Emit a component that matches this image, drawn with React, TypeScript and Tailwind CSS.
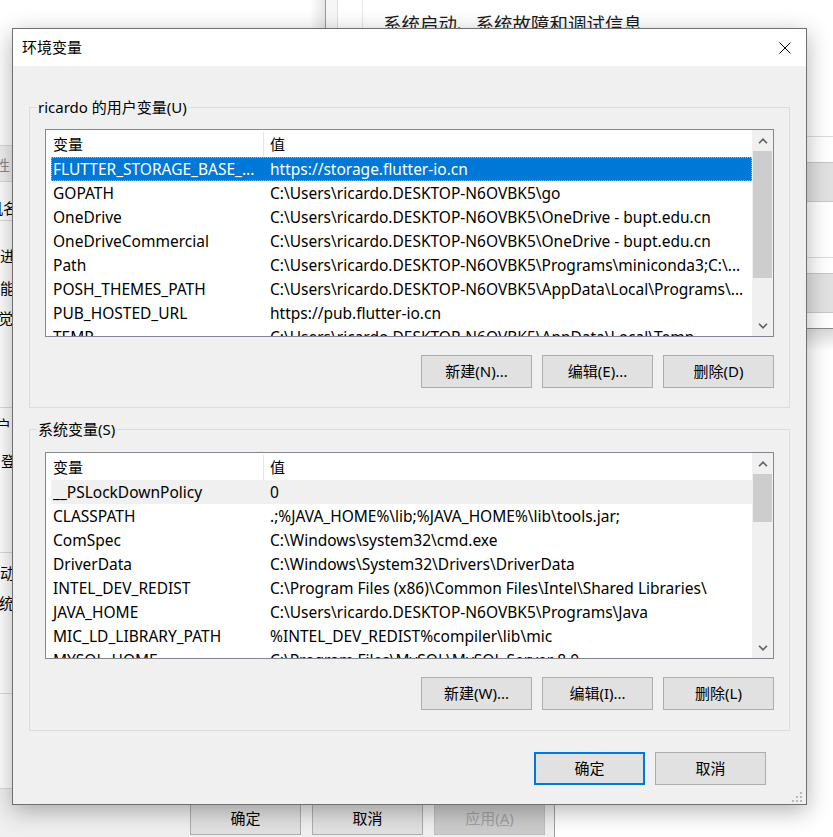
import React from "react";

type Row = [string, string];

const userRows: Row[] = [
  ["FLUTTER_STORAGE_BASE_...", "https://storage.flutter-io.cn"],
  ["GOPATH", "C:\\Users\\ricardo.DESKTOP-N6OVBK5\\go"],
  ["OneDrive", "C:\\Users\\ricardo.DESKTOP-N6OVBK5\\OneDrive - bupt.edu.cn"],
  ["OneDriveCommercial", "C:\\Users\\ricardo.DESKTOP-N6OVBK5\\OneDrive - bupt.edu.cn"],
  ["Path", "C:\\Users\\ricardo.DESKTOP-N6OVBK5\\Programs\\miniconda3;C:\\..."],
  ["POSH_THEMES_PATH", "C:\\Users\\ricardo.DESKTOP-N6OVBK5\\AppData\\Local\\Programs\\..."],
  ["PUB_HOSTED_URL", "https://pub.flutter-io.cn"],
  ["TEMP", "C:\\Users\\ricardo.DESKTOP-N6OVBK5\\AppData\\Local\\Temp"],
];

const sysRows: Row[] = [
  ["__PSLockDownPolicy", "0"],
  ["CLASSPATH", ".;%JAVA_HOME%\\lib;%JAVA_HOME%\\lib\\tools.jar;"],
  ["ComSpec", "C:\\Windows\\system32\\cmd.exe"],
  ["DriverData", "C:\\Windows\\System32\\Drivers\\DriverData"],
  ["INTEL_DEV_REDIST", "C:\\Program Files (x86)\\Common Files\\Intel\\Shared Libraries\\"],
  ["JAVA_HOME", "C:\\Users\\ricardo.DESKTOP-N6OVBK5\\Programs\\Java"],
  ["MIC_LD_LIBRARY_PATH", "%INTEL_DEV_REDIST%compiler\\lib\\mic"],
  ["MYSQL_HOME", "C:\\Program Files\\MySQL\\MySQL Server 8.0"],
];

function Chevron({ down }: { down?: boolean }) {
  return (
    <svg width="10" height="6" viewBox="0 0 10 6" className={down ? "rotate-180" : ""}>
      <path d="M1 5.2 L5 1.2 L9 5.2" fill="none" stroke="#606060" strokeWidth="1.6" />
    </svg>
  );
}

function Btn({ children, primary }: { children: React.ReactNode; primary?: boolean }) {
  return (
    <button
      className={
        primary
          ? "w-[111px] h-[33px] bg-[#e1e1e1] border-2 border-[#0078d7] text-[15px] leading-none text-black"
          : "w-[111px] h-[33px] bg-[#e1e1e1] border border-[#adadad] text-[15px] leading-none text-black"
      }
    >
      {children}
    </button>
  );
}

function VarList({
  rows,
  focused,
  listClass,
  thumbClass,
}: {
  rows: Row[];
  focused: boolean;
  listClass: string;
  thumbClass: string;
}) {
  return (
    <div className={`flex border border-[#828790] bg-white ${listClass}`}>
      <div className="flex-1 overflow-hidden flex flex-col">
        <div className="h-[27px] shrink-0 flex text-[15px] pt-[2px]">
          <div className="w-[218px] pl-[7px] border-r border-[#e5e5e5] flex items-center">变量</div>
          <div className="pl-[6px] flex items-center">值</div>
        </div>
        {rows.map(([name, value], i) => {
          const sel = i === 0;
          let cls = "ml-[5px] h-[24px] shrink-0 flex text-[15.5px] leading-[24px] whitespace-nowrap";
          if (sel && focused) cls += " bg-[#0078d7] text-white outline-1 outline-dotted outline-[#f5b04c] -outline-offset-1";
          if (sel && !focused) cls += " bg-[#f0f0f0]";
          return (
            <div key={name} className={cls}>
              <div className="w-[212px] pl-[2px] overflow-hidden">{name}</div>
              <div className="pl-[7px] overflow-hidden">{value}</div>
            </div>
          );
        })}
      </div>
      <div className="w-[21px] shrink-0 bg-[#f0f0f0] flex flex-col">
        <div className="h-[21px] flex items-center justify-center">
          <Chevron />
        </div>
        <div className={`mx-[1px] bg-[#cdcdcd] ${thumbClass}`} />
        <div className="flex-1" />
        <div className="h-[21px] flex items-center justify-center">
          <Chevron down />
        </div>
      </div>
    </div>
  );
}

function Group({ label, className, children }: { label: string; className: string; children: React.ReactNode }) {
  return (
    <div className={`relative border border-[#dcdcdc] px-[15px] ${className}`}>
      <span className="absolute left-[7px] top-[-11px] bg-[#f0f0f0] px-[1px] text-[15px] leading-[20px]">{label}</span>
      {children}
    </div>
  );
}

function Backdrop() {
  return (
    <>
      {/* window behind, top edge */}
      <div className="absolute left-[310px] top-0 w-[15px] h-[40px] bg-linear-to-r from-transparent to-black/10" />
      <div className="absolute left-[325px] top-0 w-[12px] h-[40px] bg-[#f6f6f6] border-l border-[#9a9a9a]" />
      <div className="absolute left-[337px] top-0 w-px h-[40px] bg-[#e0e0e0]" />
      <div className="absolute left-[362px] top-0 w-px h-[40px] bg-[#e6e6e6]" />
      <div className="absolute left-[383px] top-[12px] text-[18.5px] leading-[24px] whitespace-nowrap text-[#1a1a1a]">
        系统启动、系统故障和调试信息
      </div>

      {/* right strip */}
      <div className="absolute left-[806px] top-[136px] w-[27px] h-px bg-[#dcdcdc]" />
      <div className="absolute left-[806px] top-[162px] w-[27px] h-[40px] bg-[#e1e1e1] border-y border-[#c8c8c8]" />
      <div className="absolute left-[806px] top-[257px] w-[27px] h-px bg-[#dcdcdc]" />
      <div className="absolute left-[806px] top-[273px] w-[27px] h-[40px] bg-[#e1e1e1] border-y border-[#c8c8c8]" />
      <div className="absolute left-[806px] top-[328px] w-[27px] h-px bg-[#8c8c8c]" />
      <div className="absolute left-[806px] top-[329px] w-[27px] h-[22px] bg-linear-to-b from-black/15 to-transparent" />

      {/* left strip */}
      <div className="absolute left-0 top-[145px] w-[14px] h-[37px] bg-[#f0f0f0] border-y border-[#d9d9d9]" />
      <span className="absolute left-[-5px] top-[155px] text-[15px] leading-[20px] text-[#8a8a8a]">性</span>
      <span className="absolute left-[-12px] top-[198px] text-[15px] leading-[20px] whitespace-nowrap">机名</span>
      <div className="absolute left-0 top-[220px] w-[14px] h-px bg-[#dcdcdc]" />
      <span className="absolute left-0 top-[246px] text-[15px] leading-[20px]">进</span>
      <span className="absolute left-0 top-[278px] text-[15px] leading-[20px]">能</span>
      <span className="absolute left-[-2px] top-[308px] text-[15px] leading-[20px]">觉</span>
      <div className="absolute left-0 top-[407px] w-[14px] h-px bg-[#dcdcdc]" />
      <span className="absolute left-[-4px] top-[415px] text-[15px] leading-[20px]">户</span>
      <span className="absolute left-[1px] top-[451px] text-[15px] leading-[20px]">登</span>
      <div className="absolute left-0 top-[552px] w-[14px] h-px bg-[#dcdcdc]" />
      <span className="absolute left-0 top-[563px] text-[15px] leading-[20px]">动</span>
      <span className="absolute left-[-1px] top-[593px] text-[15px] leading-[20px]">统</span>
      <div className="absolute left-0 top-[693px] w-[14px] h-px bg-[#dcdcdc]" />

      {/* bottom of the window behind */}
      <div className="absolute left-0 top-[788px] w-[555px] h-[49px] bg-[#f0f0f0] border-t border-[#dadada] border-r border-r-[#a0a0a0]" />
      <div className="absolute left-[190px] top-[801px] flex gap-[11px] text-[15px]">
        <div className="w-[111px] h-[34px] bg-[#e1e1e1] border border-[#adadad] flex items-center justify-center">确定</div>
        <div className="w-[111px] h-[34px] bg-[#e1e1e1] border border-[#adadad] flex items-center justify-center">取消</div>
        <div className="w-[111px] h-[34px] bg-[#cccccc] border border-[#bfbfbf] flex items-center justify-center text-[#a0a0a0]">
          应用(<span className="underline">A</span>)
        </div>
      </div>
    </>
  );
}

export default function App() {
  return (
    <div className="relative w-[833px] h-[837px] overflow-hidden bg-white text-black [font-family:'Noto_Sans','Noto_Sans_CJK_SC',sans-serif]">
      <Backdrop />

      <div className="absolute left-[12px] top-[28px] w-[795px] h-[777px] flex flex-col bg-[#f0f0f0] border border-[#707070] shadow-[0_6px_22px_rgba(0,0,0,0.3)]">
        <div className="h-[37px] shrink-0 bg-white flex items-center justify-between pl-[9px] pr-[15px]">
          <span className="text-[15px]">环境变量</span>
          <svg width="12" height="12" viewBox="0 0 12 12">
            <path d="M0.5 0.5 L11.5 11.5 M11.5 0.5 L0.5 11.5" stroke="#000" strokeWidth="1" />
          </svg>
        </div>

        <div className="px-[16px] pt-[41px] flex flex-col">
          <Group label="ricardo 的用户变量(U)" className="pt-[21px] pb-[19px]">
            <VarList rows={userRows} focused listClass="h-[208px]" thumbClass="h-[127px]" />
            <div className="mt-[18px] flex justify-end gap-[10px]">
              <Btn>新建(N)...</Btn>
              <Btn>编辑(E)...</Btn>
              <Btn>删除(D)</Btn>
            </div>
          </Group>

          <Group label="系统变量(S)" className="mt-[21px] pt-[22px] pb-[20px]">
            <VarList rows={sysRows} focused={false} listClass="h-[207px]" thumbClass="h-[48px]" />
            <div className="mt-[18px] flex justify-end gap-[10px]">
              <Btn>新建(W)...</Btn>
              <Btn>编辑(I)...</Btn>
              <Btn>删除(L)</Btn>
            </div>
          </Group>

          <div className="mt-[21px] flex justify-end gap-[10px] pr-[24px]">
            <Btn primary>确定</Btn>
            <Btn>取消</Btn>
          </div>
        </div>

        <svg width="12" height="12" viewBox="0 0 12 12" className="absolute right-[3px] bottom-[1px]">
          {[
            [9, 1],
            [5, 5],
            [9, 5],
            [1, 9],
            [5, 9],
            [9, 9],
          ].map(([x, y]) => (
            <rect key={`${x}-${y}`} x={x} y={y} width="2" height="2" fill="#b9b9b9" />
          ))}
        </svg>
      </div>
    </div>
  );
}
